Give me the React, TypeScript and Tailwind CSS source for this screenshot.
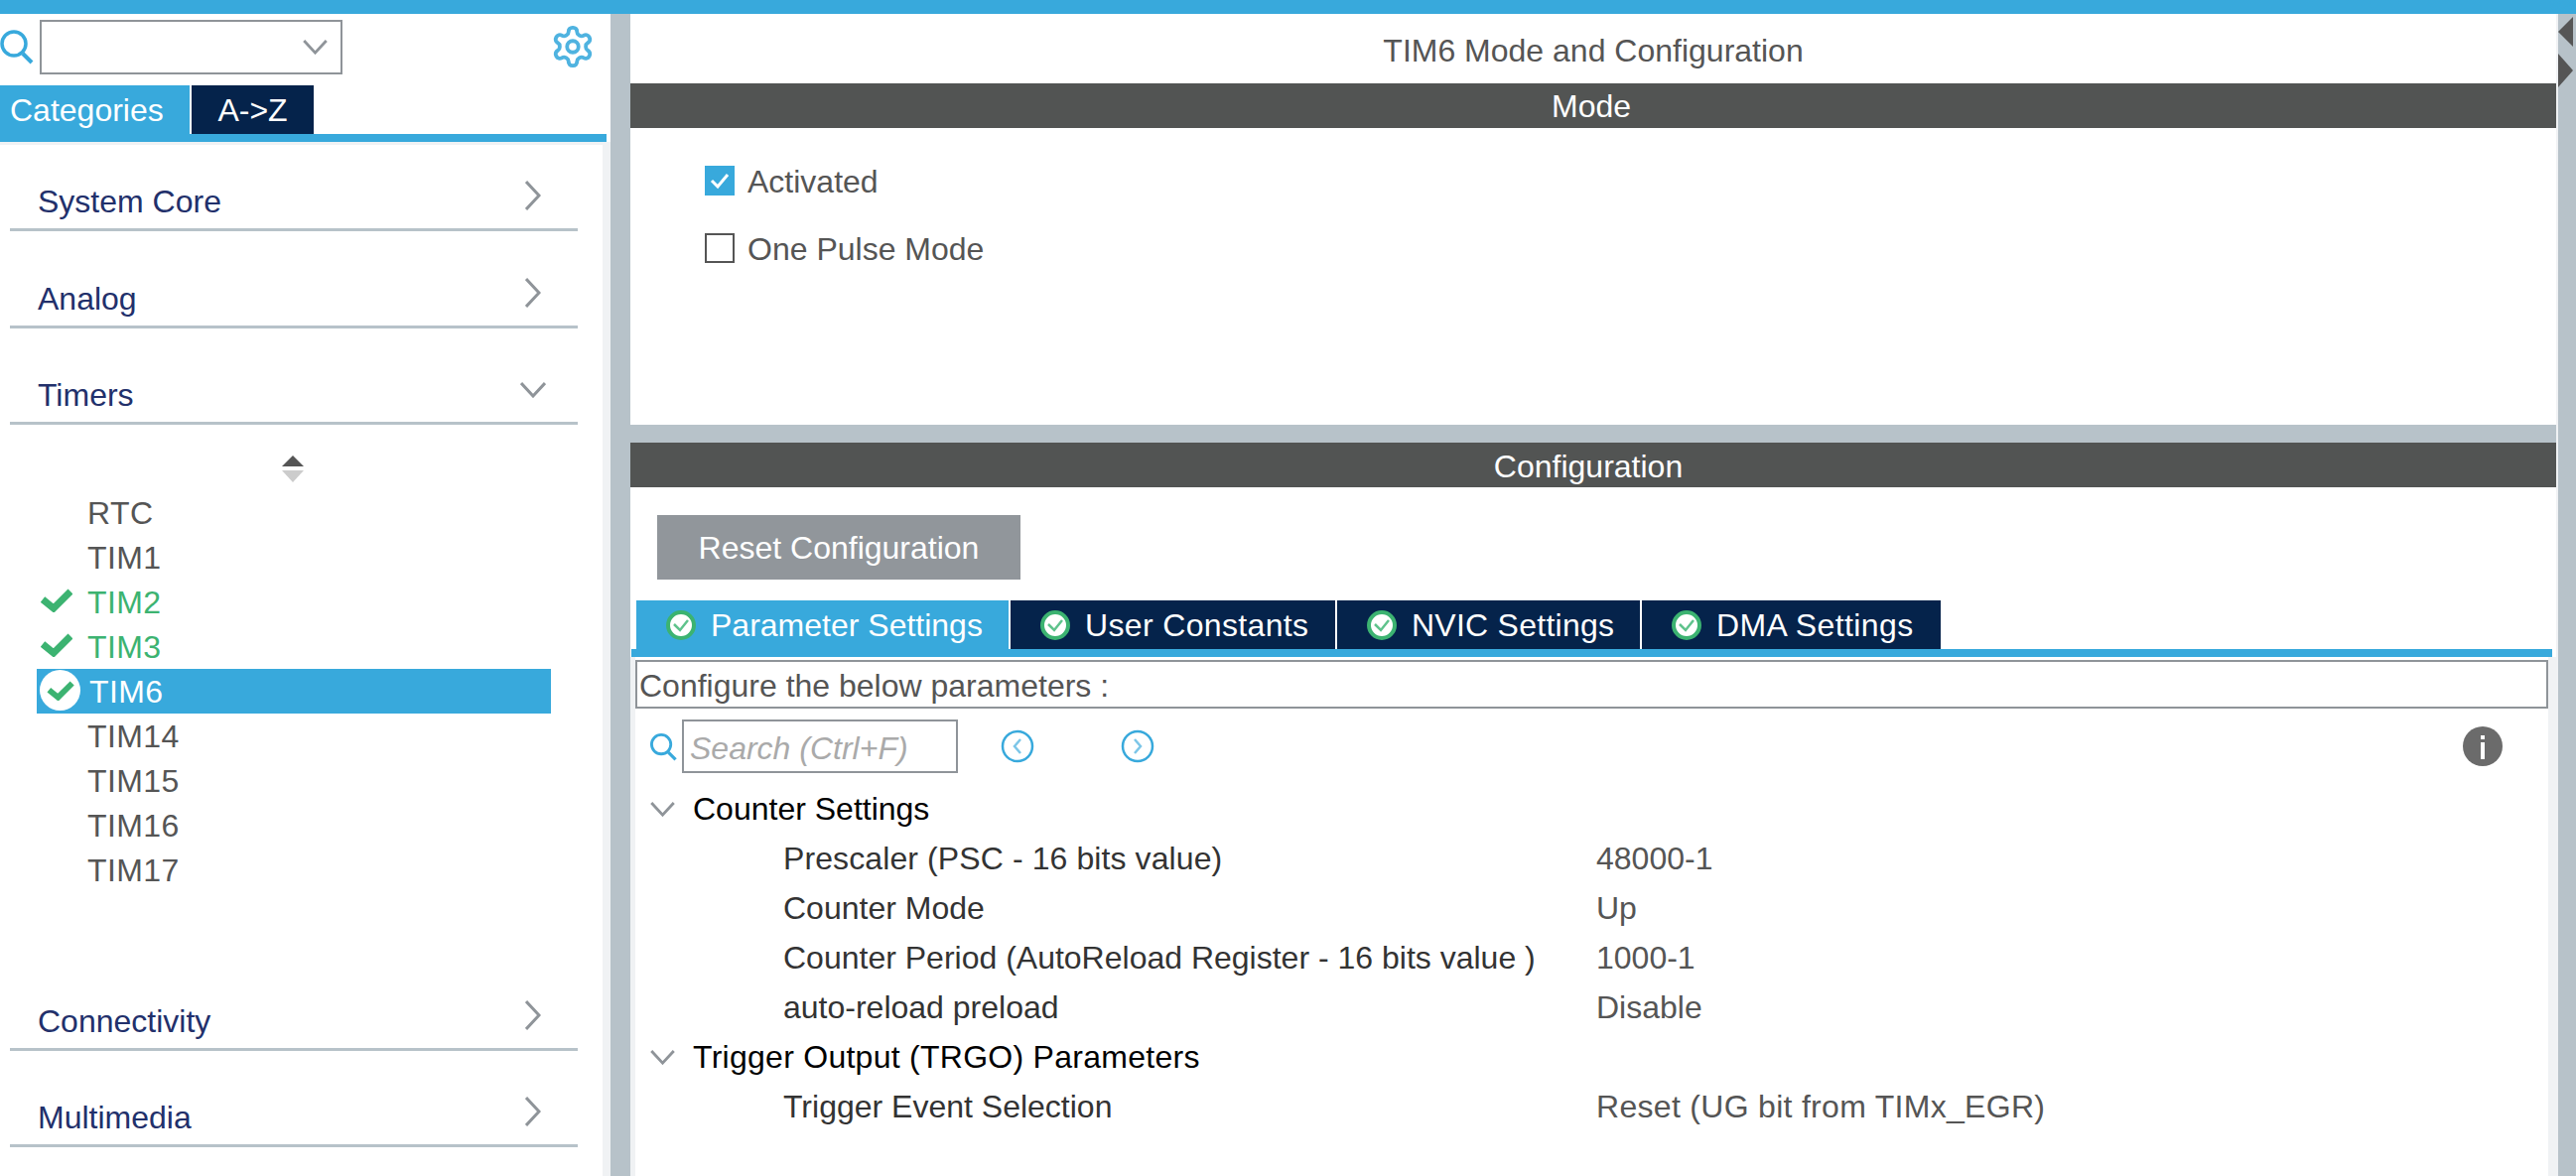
const tabs = [
  { label: "Parameter Settings", width: "w-[375px]", bg: "bg-[#38a9dc]", tracking: "" },
  { label: "User Constants", width: "w-[327px]", bg: "bg-[#05234b]", tracking: "tracking-[0.35px]" },
  { label: "NVIC Settings", width: "w-[305px]", bg: "bg-[#05234b]", tracking: "tracking-[0.25px]" },
  { label: "DMA Settings", width: "w-[301px]", bg: "bg-[#05234b]", tracking: "tracking-[0.4px]" },
];

const timers = [
  { name: "RTC" },
  { name: "TIM1" },
  { name: "TIM2", state: "ok" },
  { name: "TIM3", state: "ok" },
  { name: "TIM6", state: "selected" },
  { name: "TIM14" },
  { name: "TIM15" },
  { name: "TIM16" },
  { name: "TIM17" },
];

function SearchIcon({ className }: { className: string }) {
  return (
    <svg viewBox="0 0 34 36" className={className} fill="none" stroke="#38a9dc">
      <circle cx="14" cy="15" r="12" strokeWidth="3.5" />
      <path d="M23 25l9 9" strokeWidth="4" />
    </svg>
  );
}

function ChevronRight() {
  return (
    <svg viewBox="0 0 16 30" className="mb-[9px] h-[30px] w-[16px]" fill="none" stroke="#8f9499" strokeWidth="3">
      <path d="M1 1l13 14L1 29" />
    </svg>
  );
}

function ChevronDown({ className }: { className: string }) {
  return (
    <svg viewBox="0 0 26 16" className={className} fill="none" stroke="#8f9499" strokeWidth="3">
      <path d="M1 1l12 13L25 1" />
    </svg>
  );
}

function Check({ className }: { className: string }) {
  return (
    <svg viewBox="0 0 32 24" className={className} fill="none" stroke="#3cb371" strokeWidth="7">
      <path d="M2 11l11 9L30 3" />
    </svg>
  );
}

function TabCheck() {
  return (
    <svg viewBox="0 0 30 30" className="h-[30px] w-[30px] shrink-0">
      <circle cx="15" cy="15" r="13" fill="#fff" stroke="#3cb371" strokeWidth="4" />
      <path d="M8 14l6 6 8-10" fill="none" stroke="#5fc38c" strokeWidth="2.5" />
    </svg>
  );
}

function NavCircle({ d }: { d: string }) {
  return (
    <svg viewBox="0 0 34 34" className="h-[34px] w-[34px]" fill="none" stroke="#38a9dc" strokeWidth="2.5">
      <circle cx="17" cy="17" r="15" />
      <path d={d} stroke="#7cc6e8" />
    </svg>
  );
}

function Category({ name, height, open }: { name: string; height: string; open?: boolean }) {
  return (
    <div className={`mx-[10px] flex w-[572px] items-end justify-between border-b-[3px] border-[#b7c2c9] pb-[9px] pl-[28px] pr-[37px] ${height}`}>
      <span className="text-[32px] leading-[36px] text-[#22306b]">{name}</span>
      {open ? <ChevronDown className="mb-[15px] -mr-[5px] h-[16px] w-[26px]" /> : <ChevronRight />}
    </div>
  );
}

function Row({ label, value, head, labelClass = "", valueClass = "" }: { label: string; value?: string; head?: boolean; labelClass?: string; valueClass?: string }) {
  return (
    <div className="flex h-[50px] items-center text-[32px]">
      {head ? (
        <>
          <ChevronDown className="ml-[15px] mr-[18px] h-[15px] w-[25px]" />
          <span className={`text-black ${labelClass}`}>{label}</span>
        </>
      ) : (
        <>
          <span className={`ml-[149px] w-[819px] text-[#333] ${labelClass}`}>{label}</span>
          <span className={`text-[#555] ${valueClass}`}>{value}</span>
        </>
      )}
    </div>
  );
}

export default function App() {
  return (
    <div className="flex h-[1185px] w-[2595px] flex-col overflow-hidden bg-[#b7c2c9] font-['Liberation_Sans',Arial,sans-serif]">
      <div className="h-[14px] bg-[#38a9dc]" />
      <div className="flex flex-1">
        {/* left categories */}
        <div className="flex w-[615px] flex-col bg-white">
          <div className="flex h-[72px] items-center pb-[6px]">
            <SearchIcon className="h-[36px] w-[34px] shrink-0" />
            <div className="ml-[6px] flex h-[55px] w-[305px] items-center justify-end border-2 border-[#8f9499] pr-[13px]">
              <ChevronDown className="h-[15px] w-[25px]" />
            </div>
            <div className="ml-[209px]">
              <svg viewBox="0 0 24 24" className="h-[46px] w-[46px]" fill="none" stroke="#4fb3e0" strokeWidth="2" strokeLinejoin="round">
                <path d="M12.22 2h-.44a2 2 0 0 0-2 2v.18a2 2 0 0 1-1 1.73l-.43.25a2 2 0 0 1-2 0l-.15-.08a2 2 0 0 0-2.73.73l-.22.38a2 2 0 0 0 .73 2.73l.15.1a2 2 0 0 1 1 1.72v.51a2 2 0 0 1-1 1.74l-.15.09a2 2 0 0 0-.73 2.73l.22.38a2 2 0 0 0 2.73.73l.15-.08a2 2 0 0 1 2 0l.43.25a2 2 0 0 1 1 1.73V20a2 2 0 0 0 2 2h.44a2 2 0 0 0 2-2v-.18a2 2 0 0 1 1-1.73l.43-.25a2 2 0 0 1 2 0l.15.08a2 2 0 0 0 2.73-.73l.22-.39a2 2 0 0 0-.73-2.73l-.15-.08a2 2 0 0 1-1-1.74v-.5a2 2 0 0 1 1-1.74l.15-.09a2 2 0 0 0 .73-2.73l-.22-.38a2 2 0 0 0-2.73-.73l-.15.08a2 2 0 0 1-2 0l-.43-.25a2 2 0 0 1-1-1.73V4a2 2 0 0 0-2-2z" />
                <circle cx="12" cy="12" r="3" />
              </svg>
            </div>
          </div>
          <div className="flex h-[49px] text-[32px] text-white">
            <div className="flex w-[191px] items-center pl-[10px] bg-[#38a9dc]">Categories</div>
            <div className="ml-[2px] flex w-[123px] items-center justify-center bg-[#05234b]">A-&gt;Z</div>
          </div>
          <div className="h-[8px] w-[611px] bg-[#38a9dc]" />
          <div className="flex-1 border-t-[3px] border-r-[8px] border-[#f0f2f4]">
            <Category name="System Core" height="h-[87px]" />
            <Category name="Analog" height="h-[98px]" />
            <Category name="Timers" height="h-[97px]" open />
            <div className="flex justify-center pt-[31px] pr-[18px]">
              <svg viewBox="0 0 22 27" className="h-[27px] w-[22px]">
                <path d="M11 0l11 11H0z" fill="#555" />
                <path d="M0 15h22L11 27z" fill="#ccc" />
              </svg>
            </div>
            <div className="mb-[63px] ml-[37px] mt-[8px] w-[518px]">
              {timers.map((t) => (
                <div
                  key={t.name}
                  className={`relative flex h-[45px] items-center pl-[51px] text-[32px] tracking-[0.4px] ${
                    t.state === "selected" ? "bg-[#38a9dc] text-white" : t.state === "ok" ? "text-[#3cb371]" : "text-[#555]"
                  }`}
                >
                  {t.state === "ok" && <Check className="absolute left-[4px] top-[9px] h-[24px] w-[32px]" />}
                  {t.state === "selected" && (
                    <span className="absolute left-[3px] top-[1px] flex h-[41px] w-[41px] items-center justify-center rounded-full bg-white">
                      <Check className="h-[20px] w-[28px]" />
                    </span>
                  )}
                  <span className={t.state === "selected" ? "ml-[2px]" : ""}>{t.name}</span>
                </div>
              ))}
            </div>
            <Category name="Connectivity" height="h-[97px]" />
            <Category name="Multimedia" height="h-[97px]" />
          </div>
        </div>

        {/* right panel */}
        <div className="ml-[20px] flex w-[1942px] flex-col border-r-2 border-[#f0f2f4]">
          <div className="flex h-[70px] items-center justify-center bg-white pt-[3px] text-[32px] text-[#555]">
            TIM6 Mode and Configuration
          </div>
          <div className="flex h-[45px] items-center justify-center bg-[#525453] pr-[4px] text-[32px] text-white">Mode</div>
          <div className="flex h-[299px] flex-col gap-[38px] bg-white pl-[75px] pt-[38px] text-[32px] text-[#555]">
            <div className="flex h-[30px] items-center gap-[13px]">
              <span className="flex h-[30px] w-[30px] items-center justify-center bg-[#38a9dc]">
                <svg viewBox="0 0 30 30" className="h-[30px] w-[30px]" fill="none" stroke="#fff" strokeWidth="3">
                  <path d="M7 15l6 6 10-12" />
                </svg>
              </span>
              <span className="pt-[2px]">Activated</span>
            </div>
            <div className="flex h-[30px] items-center gap-[13px]">
              <span className="h-[30px] w-[30px] border-2 border-[#555]" />
              <span className="pt-[2px]">One Pulse Mode</span>
            </div>
          </div>
          <div className="h-[18px]" />
          <div className="flex h-[45px] items-center justify-center bg-[#525453] pr-[10px] pt-[2px] text-[32px] text-white">Configuration</div>
          <div className="bg-white pb-[21px] pl-[27px] pt-[28px]">
            <div className="flex h-[65px] w-[366px] items-center justify-center bg-[#91969b] text-[32px] text-white">Reset Configuration</div>
          </div>
          <div className="flex h-[49px] gap-[2px] bg-white pl-[6px] text-[32px] text-white">
            {tabs.map((tab) => (
              <div key={tab.label} className={`flex items-center gap-[15px] pl-[30px] ${tab.width} ${tab.bg} ${tab.tracking}`}>
                <TabCheck />
                {tab.label}
              </div>
            ))}
          </div>
          <div className="bg-white pl-px pr-[4px]">
            <div className="h-[8px] bg-[#38a9dc]" />
          </div>
          <div className="flex-1 bg-[#f0f2f4] pl-[5px] pr-[8px]">
            <div className="h-full bg-white pt-[3px]">
              <div className="flex h-[49px] items-center border-2 border-[#8f9499] pl-[2px] pt-[3px] text-[32px] text-[#555]">
                Configure the below parameters :
              </div>
              <div className="mt-[11px] flex h-[54px] items-center">
                <SearchIcon className="ml-[14px] h-[29px] w-[29px]" />
                <div className="ml-[4px] flex h-[54px] w-[278px] items-center border-2 border-[#8f9499] pl-[6px] pt-[3px] text-[32px] italic text-[#aaa]">
                  Search (Ctrl+F)
                </div>
                <div className="ml-[43px]">
                  <NavCircle d="M20 10l-6 7 6 7" />
                </div>
                <div className="ml-[87px]">
                  <NavCircle d="M14 10l6 7-6 7" />
                </div>
                <svg viewBox="0 0 40 40" className="ml-[1318px] h-[40px] w-[40px]">
                  <circle cx="20" cy="20" r="20" fill="#6b6b6b" />
                  <rect x="18" y="9" width="4" height="4" fill="#fff" />
                  <rect x="18" y="16" width="4" height="17" fill="#fff" />
                </svg>
              </div>
              <div className="mt-[11px]">
                <Row head label="Counter Settings" />
                <Row label="Prescaler (PSC - 16 bits value)" value="48000-1" labelClass="tracking-[0.1px]" />
                <Row label="Counter Mode" value="Up" />
                <Row label="Counter Period (AutoReload Register - 16 bits value )" value="1000-1" />
                <Row label="auto-reload preload" value="Disable" />
                <Row head label="Trigger Output (TRGO) Parameters" labelClass="tracking-[0.27px]" />
                <Row label="Trigger Event Selection" value="Reset (UG bit from TIMx_EGR)" valueClass="tracking-[0.3px]" />
              </div>
            </div>
          </div>
        </div>

        {/* collapse handles */}
        <div className="flex w-[18px] flex-col gap-[7px] pt-[3px]">
          <svg viewBox="0 0 15 30" className="h-[30px] w-[15px]">
            <path d="M15 0v30L0 15z" fill="#555" />
          </svg>
          <svg viewBox="0 0 15 34" className="h-[34px] w-[15px]">
            <path d="M0 0v34l15-17z" fill="#555" />
          </svg>
        </div>
      </div>
    </div>
  );
}
